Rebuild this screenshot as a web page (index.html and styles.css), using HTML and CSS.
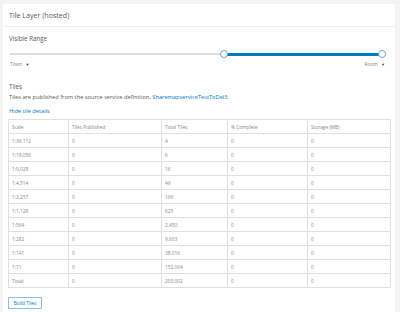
FILE: index.html
```html
<!DOCTYPE html>
<html>
<head>
<meta charset="utf-8">
<link rel="stylesheet" href="styles.css">
</head>
<body>
<div class="card">
  <div class="card-header">Tile Layer (hosted)</div>
  <div class="card-body">
    <div class="section-title">Visible Range</div>
    <div class="slider">
      <div class="track"></div>
      <div class="range"></div>
      <span class="thumb thumb-min"></span>
      <span class="thumb thumb-max"></span>
    </div>
    <div class="slider-labels">
      <span>Town <span class="caret">▼</span></span>
      <span>Room <span class="caret">▼</span></span>
    </div>
    <div class="tiles-title">Tiles</div>
    <div class="tiles-desc">Tiles are published from the source service definition, <a class="link">SharemapserviceTestToDel3</a>.</div>
    <div class="hide-link"><a class="link">Hide tile details</a></div>
    <table class="tiles-table">
      <colgroup>
        <col class="c1"><col class="c2"><col class="c3"><col class="c4"><col class="c5">
      </colgroup>
      <tr><td>Scale</td><td>Tiles Published</td><td>Total Tiles</td><td>% Complete</td><td>Storage (MB)</td></tr>
      <tr><td>1:36,112</td><td>0</td><td>4</td><td>0</td><td>0</td></tr>
      <tr><td>1:18,056</td><td>0</td><td>6</td><td>0</td><td>0</td></tr>
      <tr><td>1:9,028</td><td>0</td><td>16</td><td>0</td><td>0</td></tr>
      <tr><td>1:4,514</td><td>0</td><td>49</td><td>0</td><td>0</td></tr>
      <tr><td>1:2,257</td><td>0</td><td>169</td><td>0</td><td>0</td></tr>
      <tr><td>1:1,128</td><td>0</td><td>625</td><td>0</td><td>0</td></tr>
      <tr><td>1:564</td><td>0</td><td>2,450</td><td>0</td><td>0</td></tr>
      <tr><td>1:282</td><td>0</td><td>9,603</td><td>0</td><td>0</td></tr>
      <tr><td>1:141</td><td>0</td><td>38,016</td><td>0</td><td>0</td></tr>
      <tr><td>1:71</td><td>0</td><td>152,064</td><td>0</td><td>0</td></tr>
      <tr><td>Total:</td><td>0</td><td>203,002</td><td>0</td><td>0</td></tr>
    </table>
    <div class="actions"><button class="btn">Build Tiles</button></div>
  </div>
</div>
</body>
</html>
```
FILE: styles.css
```css
html, body {
  margin: 0;
  padding: 0;
  background: #f3f3f3;
  font-family: "Open Sans", Lato, sans-serif;
  color: #595959;
}
.card {
  margin: 4px 5px 0 3px;
  background: #fff;
  height: 308px;
  box-sizing: border-box;
}
.card-header {
  height: 23px;
  box-sizing: border-box;
  padding: 6px 6px 0;
  font-size: 7.1px;
  color: #595959;
  border-bottom: 1px solid #efefef;
}
.card-body {
  padding: 0 5px;
  display: flex;
  flex-direction: column;
}
.section-title {
  font-size: 6.2px;
  margin: 6px 1px 0;
  height: 11px;
  line-height: 11px;
  color: #595959;
}
.slider {
  position: relative;
  height: 8px;
  margin: 6px 0 0 2px;
  width: 375px;
}
.track {
  position: absolute;
  left: 0;
  right: 5px;
  top: 3px;
  height: 2px;
  background: #ececec;
  border: 1px solid #dedede;
  box-sizing: border-box;
}
.range {
  position: absolute;
  left: 214px;
  width: 158px;
  top: 3px;
  height: 3px;
  background: #0079c1;
}
.thumb {
  position: absolute;
  top: 0;
  width: 8px;
  height: 8px;
  box-sizing: border-box;
  border-radius: 50%;
  background: #fff;
  border: 1px solid #6aa5d0;
}
.thumb-min { left: 210px; }
.thumb-max { left: 368px; }
.slider-labels {
  display: flex;
  justify-content: space-between;
  font-size: 4.8px;
  color: #888;
  margin: 2px 5px 0 2px;
  height: 8px;
  line-height: 8px;
}
.caret { font-size: 4px; color: #444; margin-left: 2px; }
.tiles-title {
  font-size: 6.2px;
  margin: 14px 1px 0;
  height: 10px;
  line-height: 10px;
  color: #595959;
}
.tiles-desc {
  font-size: 5.7px;
  margin: 0 1px;
  height: 10px;
  line-height: 10px;
  color: #595959;
}
.link { color: #0079c1; text-decoration: none; }
.hide-link {
  font-size: 5.7px;
  margin: 4px 1px 0;
  height: 10px;
  line-height: 10px;
}
.tiles-table {
  margin-top: 3px;
  border-collapse: collapse;
  width: 382px;
  table-layout: fixed;
  font-size: 4.8px;
  color: #888;
}
.tiles-table tr { height: 14px; }
.tiles-table td {
  border: 1px solid #e0e0e0;
  padding: 0 3px;
  line-height: 12px;
  white-space: nowrap;
  overflow: hidden;
}
.c1 { width: 60px; }
.c2 { width: 93px; }
.c3 { width: 66px; }
.c4 { width: 80px; }
.c5 { width: 83px; }
.actions { margin-top: 9px; }
.btn {
  font-family: "Open Sans", Lato, sans-serif;
  font-size: 4.8px;
  color: #0079c1;
  background: #fff;
  border: 1px solid #8cbfe3;
  width: 34px;
  height: 12px;
  padding: 0;
  line-height: 10px;
  display: block;
}
```
